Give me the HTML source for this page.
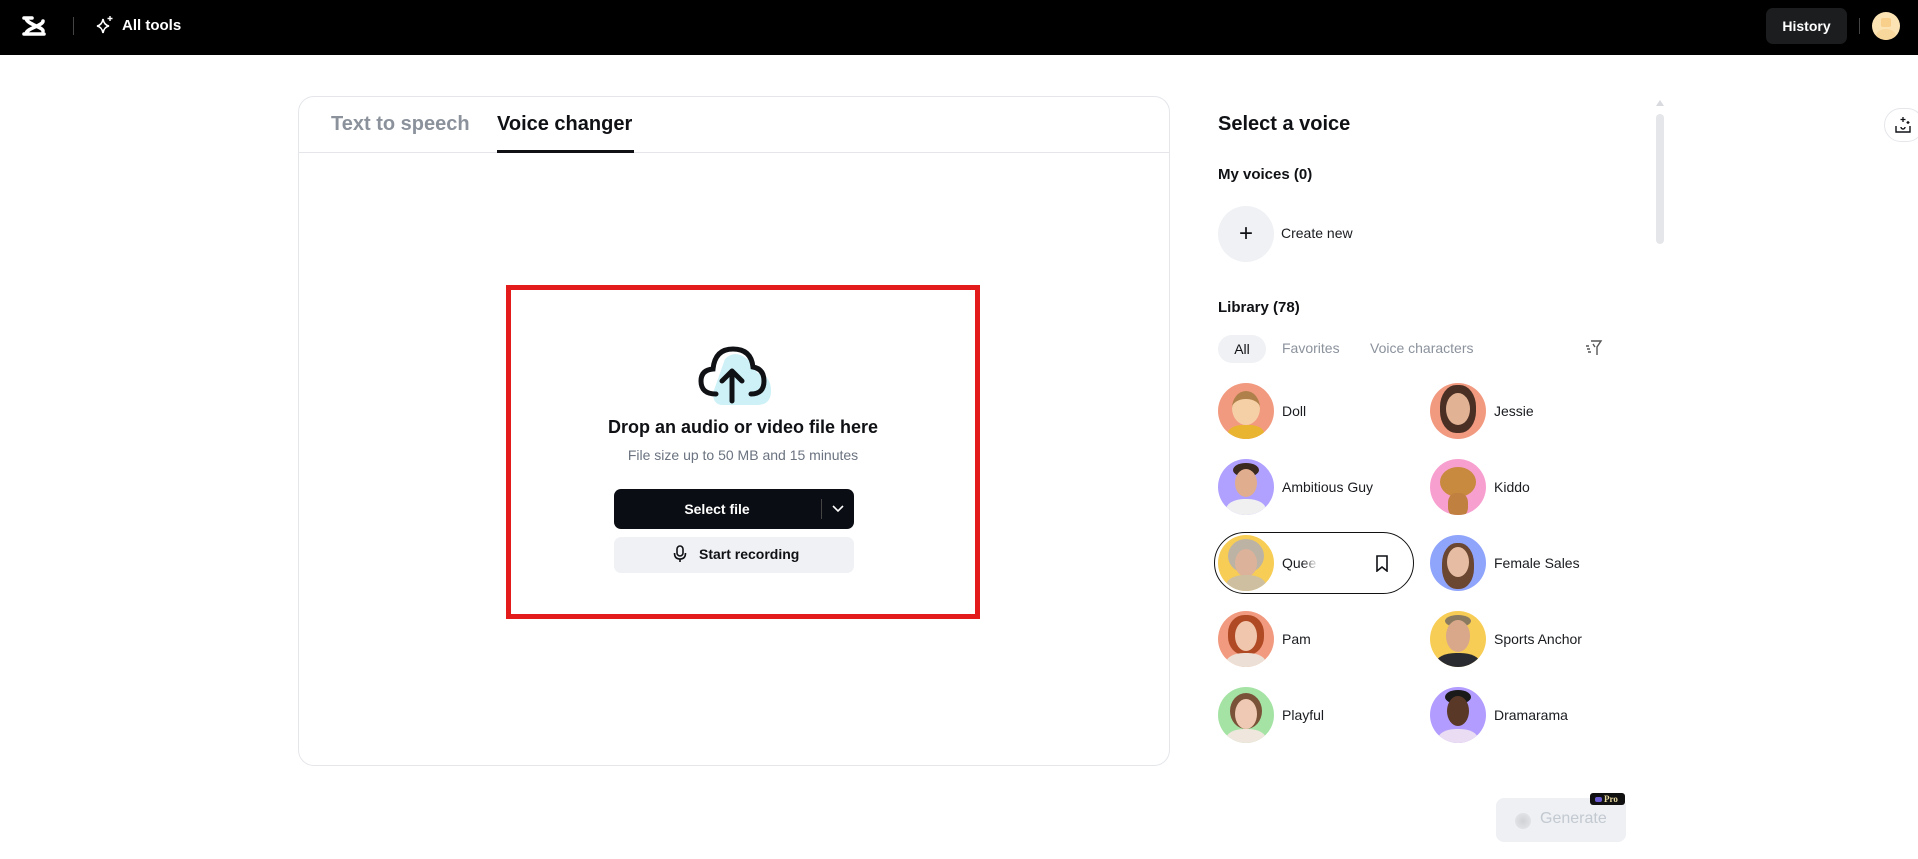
<!DOCTYPE html>
<html><head><meta charset="utf-8"><style>
*{box-sizing:border-box;margin:0;padding:0}
body{width:1918px;height:859px;background:#fff;font-family:"Liberation Sans",sans-serif;position:relative;overflow:hidden;color:#0f1115}
.a{position:absolute}
.hdr{left:0;top:0;width:1918px;height:55px;background:#000}
.card{left:298px;top:96px;width:872px;height:670px;border:1px solid #e4e6ea;border-radius:16px}
.tab{font-size:20px;font-weight:700;top:113px}
.av{width:56px;height:56px;border-radius:50%;overflow:hidden}
.nm{font-size:14px;color:#1a1c20}
</style></head><body>
<div class="a hdr">
  <svg class="a" style="left:21px;top:15px" width="27" height="22" viewBox="0 0 27 22"><path d="M3 3h8M3 19h20M5 3c0 6 17 9 17 13M22 6c0 5-17 7-17 13" stroke="#fff" stroke-width="3.6" fill="none" stroke-linecap="round"/></svg>
  <div class="a" style="left:73px;top:17px;width:1px;height:18px;background:#444"></div>
  <svg class="a" style="left:95px;top:15px" width="20" height="20" viewBox="0 0 20 20"><path d="M8 4 Q9 10 14 11 Q9 12 8 18 Q7 12 2 11 Q7 10 8 4Z" stroke="#fff" stroke-width="1.6" fill="none"/><path d="M15 1v5M12.5 3.5h5" stroke="#fff" stroke-width="1.4"/></svg>
  <div class="a" style="left:122px;top:17px;color:#fff;font-size:15px;font-weight:700">All tools</div>
  <div class="a" style="left:1766px;top:8px;width:81px;height:36px;background:#1c1d1f;border-radius:7px;color:#fff;font-weight:700;font-size:14px;text-align:center;line-height:36px">History</div>
  <div class="a" style="left:1859px;top:18px;width:1px;height:16px;background:#444"></div>
  <div class="a" style="left:1872px;top:12px;width:28px;height:28px;border-radius:50%;background:#fbe3b4;overflow:hidden"><div class="a" style="left:9px;top:6px;width:10px;height:9px;background:#f8cf8b;border-radius:2px"></div><div class="a" style="left:4px;top:17px;width:20px;height:14px;background:#f8d79d;border-radius:50%"></div></div>
</div>

<div class="a card"></div>
<div class="a tab" style="left:331px;color:#8b929c">Text to speech</div>
<div class="a tab" style="left:497px;color:#0f1115">Voice changer</div>
<div class="a" style="left:299px;top:152px;width:870px;height:1px;background:#e4e6ea"></div>
<div class="a" style="left:497px;top:150px;width:137px;height:3px;background:#0f1115"></div>

<div class="a" style="left:506px;top:285px;width:474px;height:334px;border:5px solid #e31b1b"></div>
<svg class="a" style="left:695px;top:345px" width="80" height="66" viewBox="0 0 80 66"><path d="M30 14 Q40 4 52 14 Q60 16 62 28 Q76 30 76 46 Q76 60 62 60 H28 Q18 60 18 48Z" fill="#cdf1f7"/><path d="M21 49 Q6 49 6 36 Q6 25 18 24 Q20 4 38 4 Q56 4 58 22 Q69 24 69 36 Q69 49 56 49" stroke="#0f1115" stroke-width="5" fill="none" stroke-linecap="round"/><path d="M37 56 V27 M27 36 L37 26 L47 36" stroke="#0f1115" stroke-width="5" fill="none" stroke-linecap="round" stroke-linejoin="round"/></svg>
<div class="a" style="left:505px;width:476px;top:417px;text-align:center;font-size:18px;font-weight:700">Drop an audio or video file here</div>
<div class="a" style="left:505px;width:476px;top:447px;text-align:center;font-size:14px;color:#6b7380">File size up to 50 MB and 15 minutes</div>
<div class="a" style="left:614px;top:489px;width:240px;height:40px;background:#0b0d14;border-radius:7px"></div>
<div class="a" style="left:614px;top:489px;width:206px;height:40px;line-height:40px;text-align:center;color:#fff;font-size:14px;font-weight:700">Select file</div>
<div class="a" style="left:821px;top:499px;width:1px;height:20px;background:#444"></div>
<svg class="a" style="left:832px;top:504px" width="12" height="10"><path d="M1 2 L6 7 L11 2" stroke="#fff" stroke-width="1.6" fill="none"/></svg>
<div class="a" style="left:614px;top:537px;width:240px;height:36px;background:#eff1f4;border-radius:7px"></div>
<svg class="a" style="left:673px;top:545px" width="14" height="18" viewBox="0 0 14 18"><rect x="4" y="1" width="6" height="10" rx="3" stroke="#0f1115" stroke-width="1.6" fill="none"/><path d="M1.5 8 Q1.5 14 7 14 Q12.5 14 12.5 8 M7 14 V17" stroke="#0f1115" stroke-width="1.6" fill="none"/></svg>
<div class="a" style="left:699px;top:546px;font-size:14px;font-weight:700">Start recording</div>

<div class="a" style="left:1218px;top:113px;font-size:20px;font-weight:700">Select a voice</div>
<div class="a" style="left:1218px;top:166px;font-size:15px;font-weight:700">My voices (0)</div>
<div class="a" style="left:1218px;top:206px;width:56px;height:56px;border-radius:50%;background:#eff1f4"></div>
<div class="a" style="left:1238px;top:224px;font-size:24px;line-height:20px;width:16px;text-align:center">+</div>
<div class="a nm" style="left:1281px;top:225px">Create new</div>
<div class="a" style="left:1218px;top:299px;font-size:15px;font-weight:700">Library (78)</div>
<div class="a" style="left:1218px;top:335px;width:48px;height:28px;border-radius:14px;background:#eff1f4;font-size:14px;text-align:center;line-height:28px">All</div>
<div class="a" style="left:1282px;top:340px;font-size:14px;color:#8b929c">Favorites</div>
<div class="a" style="left:1370px;top:340px;font-size:14px;color:#8b929c">Voice characters</div>
<svg class="a" style="left:1585px;top:339px" width="18" height="18" viewBox="0 0 18 18"><path d="M6 2 H16 L12 8 V16 M10 8 L8 5 M1 7h3M2 10h3M3 13h3" stroke="#555" stroke-width="1.4" fill="none"/></svg>
<div class="a" style="left:1656px;top:100px;width:0;height:0;border-left:4px solid transparent;border-right:4px solid transparent;border-bottom:6px solid #d8dadf"></div>
<div class="a" style="left:1656px;top:114px;width:8px;height:130px;border-radius:4px;background:#e4e6ea"></div>
<div class="a" style="left:1884px;top:108px;width:40px;height:34px;border:1px solid #e4e6ea;border-radius:17px"></div>
<svg class="a" style="left:1894px;top:116px" width="18" height="18" viewBox="0 0 18 18"><path d="M2 10v6h14v-6M7 11a2 2 0 0 0 4 0" stroke="#0f1115" stroke-width="1.4" fill="none"/><path d="M9 1v5M6.5 3.5h5M14 5v3M12.5 6.5h3" stroke="#0f1115" stroke-width="1.3"/></svg>

<div class="a" style="left:1214px;top:532px;width:200px;height:62px;border:1.5px solid #111;border-radius:31px"></div>
<svg class="a" style="left:1375px;top:555px" width="14" height="17"><path d="M2 1h10v15l-5-4-5 4z" stroke="#0f1115" stroke-width="1.6" fill="none"/></svg>

<div class="a av" style="left:1218px;top:383px;background:#f29a80"><div class="a" style="left:14px;top:8px;width:28px;height:34px;border-radius:50%;background:#f5cfa6;border-top:8px solid #b0804a"></div><div class="a" style="left:10px;top:42px;width:36px;height:20px;border-radius:40%;background:#e9b530"></div></div>
<div class="a nm" style="left:1282px;top:403px">Doll</div>
<div class="a av" style="left:1430px;top:383px;background:#f29a80"><div class="a" style="left:10px;top:2px;width:36px;height:48px;border-radius:45%;background:#4a3024"></div><div class="a" style="left:16px;top:10px;width:24px;height:32px;border-radius:50%;background:#e2b294"></div></div>
<div class="a nm" style="left:1494px;top:403px">Jessie</div>

<div class="a av" style="left:1218px;top:459px;background:#b0a0ff"><div class="a" style="left:15px;top:4px;width:26px;height:14px;border-radius:50%;background:#3b2a20"></div><div class="a" style="left:17px;top:10px;width:22px;height:28px;border-radius:50%;background:#e0ad8e"></div><div class="a" style="left:8px;top:40px;width:40px;height:24px;border-radius:45%;background:#f0f0f0"></div></div>
<div class="a nm" style="left:1282px;top:479px">Ambitious Guy</div>
<div class="a av" style="left:1430px;top:459px;background:#f7a0d0"><div class="a" style="left:10px;top:8px;width:36px;height:30px;border-radius:50%;background:#c88a3e"></div><div class="a" style="left:18px;top:34px;width:20px;height:24px;border-radius:40%;background:#c08040"></div></div>
<div class="a nm" style="left:1494px;top:479px">Kiddo</div>

<div class="a av" style="left:1218px;top:535px;background:#f7cd55"><div class="a" style="left:10px;top:4px;width:36px;height:34px;border-radius:50%;background:#bdb3a4"></div><div class="a" style="left:17px;top:14px;width:22px;height:28px;border-radius:50%;background:#dcb39a"></div><div class="a" style="left:8px;top:40px;width:40px;height:24px;border-radius:45%;background:#cdbfa0"></div></div>
<div class="a nm" style="left:1282px;top:555px;background:linear-gradient(90deg,#1a1c20 60%,#ddd);-webkit-background-clip:text;background-clip:text;color:transparent">Quee</div>
<div class="a av" style="left:1430px;top:535px;background:#8fa4fb"><div class="a" style="left:12px;top:8px;width:32px;height:46px;border-radius:45%;background:#6b4630"></div><div class="a" style="left:17px;top:12px;width:22px;height:30px;border-radius:50%;background:#e6bda2"></div></div>
<div class="a nm" style="left:1494px;top:555px">Female Sales</div>

<div class="a av" style="left:1218px;top:611px;background:#f29a80"><div class="a" style="left:10px;top:4px;width:36px;height:40px;border-radius:45%;background:#b04a24"></div><div class="a" style="left:17px;top:10px;width:22px;height:30px;border-radius:50%;background:#f0c6ad"></div><div class="a" style="left:8px;top:42px;width:40px;height:22px;border-radius:45%;background:#ece0d6"></div></div>
<div class="a nm" style="left:1282px;top:631px">Pam</div>
<div class="a av" style="left:1430px;top:611px;background:#f7cd55"><div class="a" style="left:15px;top:4px;width:26px;height:12px;border-radius:50%;background:#8a7a60"></div><div class="a" style="left:16px;top:9px;width:24px;height:32px;border-radius:50%;background:#d9a88a"></div><div class="a" style="left:6px;top:42px;width:44px;height:22px;border-radius:45%;background:#2a2b30"></div></div>
<div class="a nm" style="left:1494px;top:631px">Sports Anchor</div>

<div class="a av" style="left:1218px;top:687px;background:#a5e3a5"><div class="a" style="left:12px;top:6px;width:32px;height:36px;border-radius:50%;background:#7a5238"></div><div class="a" style="left:17px;top:12px;width:22px;height:30px;border-radius:50%;background:#efc9b3"></div><div class="a" style="left:8px;top:42px;width:40px;height:22px;border-radius:45%;background:#efe6dd"></div></div>
<div class="a nm" style="left:1282px;top:707px">Playful</div>
<div class="a av" style="left:1430px;top:687px;background:#b29cff"><div class="a" style="left:15px;top:3px;width:26px;height:14px;border-radius:50%;background:#1a1a1a"></div><div class="a" style="left:17px;top:9px;width:22px;height:30px;border-radius:50%;background:#5a3828"></div><div class="a" style="left:8px;top:42px;width:40px;height:22px;border-radius:45%;background:#eadcf2"></div></div>
<div class="a nm" style="left:1494px;top:707px">Dramarama</div>

<div class="a" style="left:1200px;top:745px;width:470px;height:18px;background:linear-gradient(rgba(255,255,255,0.5),#fff)"></div>

<div class="a" style="left:1496px;top:798px;width:130px;height:44px;background:#eef0f3;border-radius:8px"></div>
<div class="a" style="left:1515px;top:813px;width:16px;height:16px;border-radius:50%;background:radial-gradient(#d0d2d6,#e8e9ec)"></div>
<div class="a" style="left:1540px;top:810px;font-size:16px;color:#c3c9d1">Generate</div>
<div class="a" style="left:1590px;top:793px;width:35px;height:12px;background:#111;border-radius:3px;color:#e8d9a0;font-size:9px;font-family:'Liberation Serif',serif;font-weight:700;line-height:12px;padding-left:14px">Pro</div>
<div class="a" style="left:1595px;top:797px;width:7px;height:5px;background:#6b5bd0;border-radius:2px"></div>
</body></html>
